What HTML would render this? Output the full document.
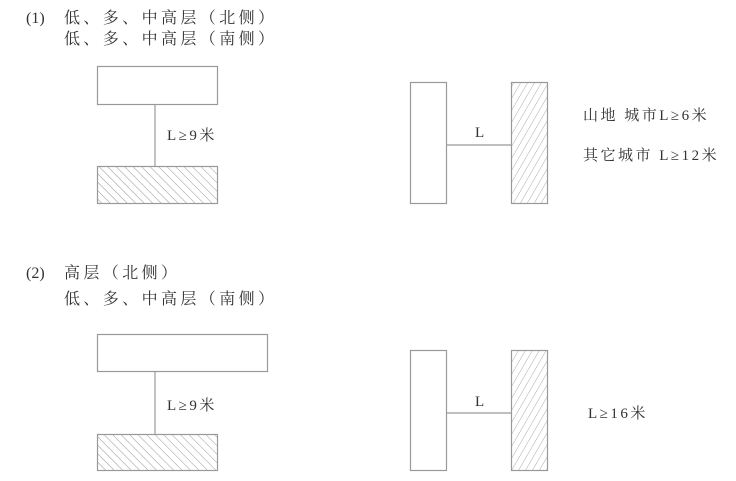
<!DOCTYPE html>
<html><head><meta charset="utf-8"><style>
html,body{margin:0;padding:0;background:#fff;}
svg{display:block}
text{font-family:"Liberation Serif","Noto Serif CJK SC",serif;font-size:15px;fill:#333;}
.t{font-size:16px;letter-spacing:3.4px}
.s{letter-spacing:2.5px}
.p{font-size:16px}
</style></head><body>
<svg width="736" height="481" viewBox="0 0 736 481" xmlns="http://www.w3.org/2000/svg">
<defs>
<pattern id="hb" patternUnits="userSpaceOnUse" width="6" height="6" patternTransform="rotate(-45)">
<line x1="0" y1="0" x2="0" y2="6" stroke="#999" stroke-width="1"/></pattern>
<pattern id="hf" patternUnits="userSpaceOnUse" width="6" height="6" patternTransform="rotate(30)">
<line x1="0" y1="0" x2="0" y2="6" stroke="#aaa" stroke-width="1"/></pattern>
</defs>
<g fill="none" stroke="#999" stroke-width="1.2">
<text x="26" y="23" stroke="none" class="p">(1)</text>
<text x="64" y="23" stroke="none" class="t">低、多、中高层（北侧）</text>
<text x="64" y="44" stroke="none" class="t">低、多、中高层（南侧）</text>
<rect x="97.5" y="66.5" width="120" height="38"/>
<line x1="155" y1="104" x2="155" y2="166"/>
<rect x="97.5" y="166.5" width="120" height="37" fill="url(#hb)"/>
<text x="167" y="140" stroke="none" class="s">L≥9米</text>
<rect x="410.5" y="82.5" width="36" height="121"/>
<rect x="511.5" y="82.5" width="36" height="121" fill="url(#hf)"/>
<line x1="447" y1="145" x2="511" y2="145"/>
<text x="475" y="137" stroke="none">L</text>
<text x="583" y="120" stroke="none" class="s">山地 城市L≥6米</text>
<text x="583" y="160" stroke="none" class="s">其它城市 L≥12米</text>

<text x="26" y="278" stroke="none" class="p">(2)</text>
<text x="64" y="278" stroke="none" class="t">高层（北侧）</text>
<text x="64" y="304" stroke="none" class="t">低、多、中高层（南侧）</text>
<rect x="97.5" y="334.5" width="170" height="37"/>
<line x1="155" y1="372" x2="155" y2="434"/>
<rect x="97.5" y="434.5" width="120" height="36" fill="url(#hb)"/>
<text x="167" y="410" stroke="none" class="s">L≥9米</text>
<rect x="410.5" y="350.5" width="36" height="120"/>
<rect x="511.5" y="350.5" width="36" height="120" fill="url(#hf)"/>
<line x1="447" y1="413" x2="511" y2="413"/>
<text x="475" y="406" stroke="none">L</text>
<text x="588" y="418" stroke="none" class="s">L≥16米</text>
</g>
</svg>
</body></html>
